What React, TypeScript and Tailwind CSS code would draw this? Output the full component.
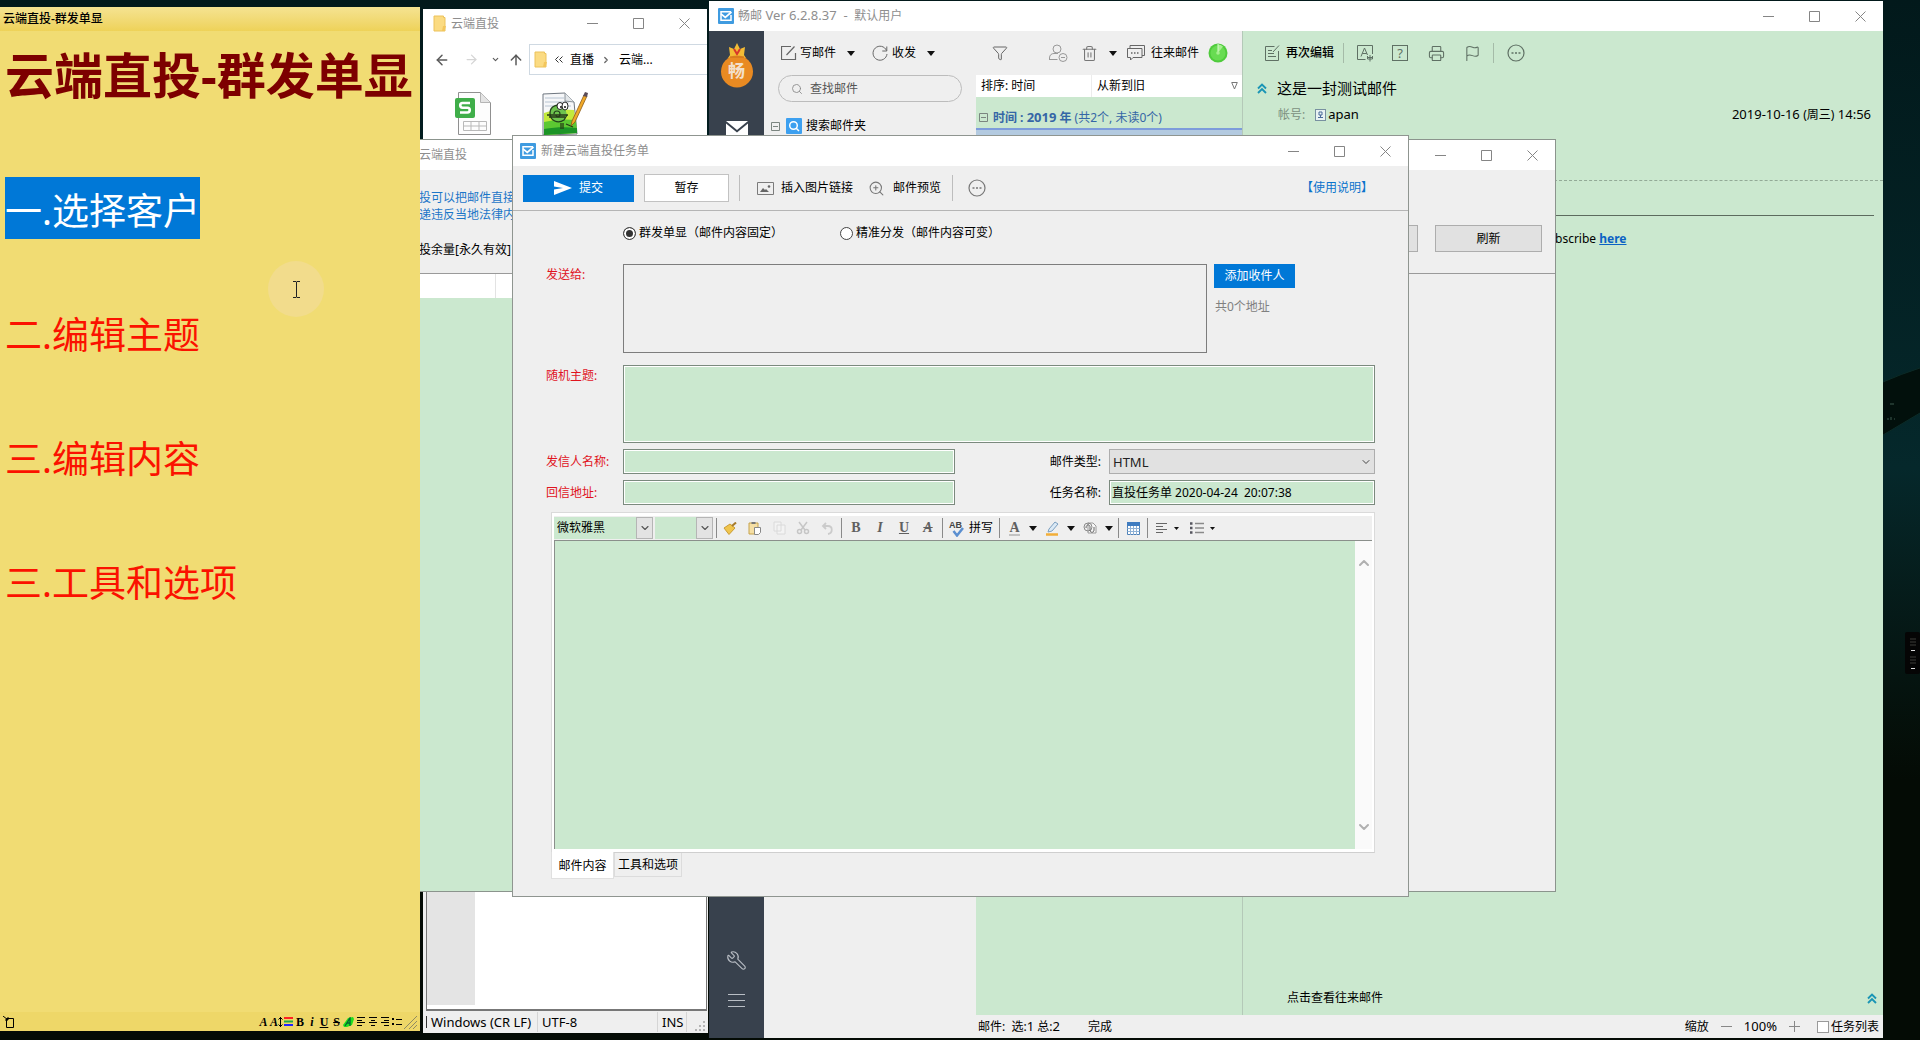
import React from "react";
import {
  ArrowLeft,
  ArrowRight,
  ArrowUp,
  ChevronDown,
  ChevronUp,
  ChevronRight,
  Filter,
  Flag,
  Printer,
  Search,
  Trash2,
  Wrench,
  ZoomIn,
} from "lucide-react";

function Svg({ w, h, box, className = "", children }: { w: number; h: number; box?: string; className?: string; children: React.ReactNode }) {
  return (
    <svg width={w} height={h} viewBox={box ?? `0 0 ${w} ${h}`} fill="none" className={`shrink-0 ${className}`} aria-hidden="true">
      {children}
    </svg>
  );
}

function AppIcon() {
  return (
    <Svg w={16} h={16}>
      <rect width="16" height="16" rx="1" fill="#3f9be0" />
      <path d="M13 7v5.300H3V3.700h10" stroke="#fff" strokeWidth="1.500" />
      <path d="M3 5.800 7.300 9.400 13.500 4" stroke="#fff" strokeWidth="1.700" />
    </Svg>
  );
}

function FolderIcon({ className = "" }: { className?: string }) {
  return (
    <Svg w={14} h={17} className={className}>
      <path d="M1 1h9.500v1.500H12v13.500H1z" fill="#fbdb82" stroke="#ecc25b" strokeWidth="1" />
      <path d="M10 11h3l-1.500 5H9z" fill="#f3c65c" />
    </Svg>
  );
}

function MoreIcon({ className = "" }: { className?: string }) {
  return (
    <Svg w={18} h={18} className={className}>
      <circle cx="9" cy="9" r="8" stroke="currentColor" strokeWidth="1.200" />
      <path d="M4.500 9h2M8 9h2M11.500 9h2" stroke="currentColor" strokeWidth="1.600" />
    </Svg>
  );
}

function DoubleChevron() {
  return (
    <Svg w={10} h={11}>
      <path d="m1 5.500 4-4 4 4M1 10l4-4 4 4" stroke="#1a95b5" strokeWidth="1.900" />
    </Svg>
  );
}

function WindowButtons() {
  return (
    <div className="ml-auto flex h-full shrink-0 text-[#858585]">
      <button aria-label="最小化" className="flex w-[46px] items-center justify-center">
        <Svg w={11} h={11}><path d="M0 5.500h11" stroke="currentColor" /></Svg>
      </button>
      <button aria-label="最大化" className="flex w-[46px] items-center justify-center">
        <Svg w={11} h={11}><path d="M.5.5h10v10H.5z" stroke="currentColor" /></Svg>
      </button>
      <button aria-label="关闭" className="flex w-[46px] items-center justify-center">
        <Svg w={11} h={11}><path d="M.5.5l10 10M10.500.5l-10 10" stroke="currentColor" /></Svg>
      </button>
    </div>
  );
}

function Caret({ className = "" }: { className?: string }) {
  return (
    <Svg w={8} h={5} className={className}><path d="M0 0h8L4 5z" fill="#111" /></Svg>
  );
}

function Expander() {
  return (
    <Svg w={9} h={9}><path d="M.5.5h8v8h-8zM2 4.500h5" stroke="#7b8580" /></Svg>
  );
}

function StickyNote() {
  return (
    <section className="absolute top-[7px] bottom-[9px] left-0 z-30 flex w-[420px] flex-col bg-[#f1dc73]">
      <header className="flex h-6 shrink-0 items-center bg-linear-to-b from-[#f5e391] to-[#eed258] pl-[3px] text-[12px] leading-6 font-medium text-black">
        云端直投-群发单显
      </header>
      <div className="flex-1 px-[5px] text-[37px] leading-[56px] text-[#fb1200]">
        <h1 className="pt-1 text-[49px] leading-[80px] font-bold whitespace-nowrap text-[#7d0000]">云端直投-群发单显</h1>
        <p className="mt-[62px] flex"><span className="bg-[#0078d7] pt-[6px] text-white">一.选择客户</span></p>
        <p className="mt-[62px] pt-[6px]">二.编辑主题</p>
        <p className="mt-[62px] pt-[6px]">三.编辑内容</p>
        <p className="mt-[62px] pt-[6px]">三.工具和选项</p>
      </div>
      <div className="absolute top-[254px] left-[268px] flex size-14 items-center justify-center rounded-full bg-[#f2dc8c]">
        <Svg w={9} h={17}><path d="M1 .5h3l.5.5.5-.5h3M1 16.500h3l.5-.5.5.5h3M4.500 1v15" stroke="#222" /></Svg>
      </div>
      <footer className="flex h-[19px] shrink-0 items-center bg-[#eed768] pr-[3px] pl-[3px] text-black">
        <Svg w={12} h={12}><path d="M3.500 2.500h7v9h-7zM0 0l5 4M5 1v3H2" stroke="#000" /></Svg>
        <div className="ml-auto flex items-center gap-[1px] font-[Liberation_Serif] text-[12px] leading-[12px] font-bold">
          <button aria-label="字体" className="w-[11px] italic">A</button>
          <button aria-label="字号" className="flex w-[12px] items-center italic">A<Svg w={5} h={10}><path d="M2.500 0v10M.5 2.500l2-2 2 2M.5 7.500l2 2 2-2" stroke="#000" /></Svg></button>
          <button aria-label="颜色" className="flex w-[10px] justify-center">
            <Svg w={9} h={9}><path d="M0 1h9" stroke="#f22" strokeWidth="2" /><path d="M0 4.500h9" stroke="#2a4" strokeWidth="2" /><path d="M0 8h9" stroke="#22f" strokeWidth="2" /></Svg>
          </button>
          <button aria-label="粗体" className="w-[12px]">B</button>
          <button aria-label="斜体" className="w-[10px] italic">i</button>
          <button aria-label="下划线" className="w-[12px] underline">U</button>
          <button aria-label="删除线" className="w-[11px] line-through">S</button>
          <button aria-label="高亮" className="flex w-[11px] justify-center">
            <Svg w={11} h={10}><path d="M0 8 5 1l5-1 1 2-2 6-5 2H1z" fill="#1fe01f" /><path d="m2 9 5-8v8M4 6h3" stroke="#063" strokeWidth="1.300" /></Svg>
          </button>
          <button aria-label="左对齐" className="flex w-[11px] justify-center"><Svg w={8} h={9}><path d="M0 .5h8M0 3.500h5M0 5.500h8M0 8.500h5" stroke="#000" /></Svg></button>
          <button aria-label="居中" className="flex w-[11px] justify-center"><Svg w={8} h={9}><path d="M0 .5h8M2 3.500h4M0 5.500h8M2 8.500h4" stroke="#000" /></Svg></button>
          <button aria-label="右对齐" className="flex w-[11px] justify-center"><Svg w={8} h={9}><path d="M0 .5h8M3 3.500h5M0 5.500h8M3 8.500h5" stroke="#000" /></Svg></button>
          <button aria-label="列表" className="flex w-[12px] justify-center"><Svg w={10} h={8}><path d="M0 1h2M0 6h2" stroke="#000" strokeWidth="2" /><path d="M4 1.500h6M4 6.500h6" stroke="#000" /></Svg></button>
        </div>
        <Svg w={14} h={14}><path d="M1 14 14 1M6 14l8-8M10 14l4-4" stroke="#8f8a63" /></Svg>
      </footer>
    </section>
  );
}

function ExplorerWindow() {
  return (
    <section className="absolute top-[9px] left-[423px] flex h-[240px] w-[284px] flex-col bg-white">
      <header className="flex h-[29px] shrink-0 items-center pl-[10px] text-[12px] text-[#8e8e8e]">
        <FolderIcon />
        <span className="ml-1">云端直投</span>
        <WindowButtons />
      </header>
      <nav className="mt-[6px] flex h-[31px] shrink-0 items-center text-[#5a5a5a]">
        <button aria-label="后退" className="ml-[11px]"><ArrowLeft size={16} strokeWidth={2.25} /></button>
        <button aria-label="前进" className="ml-[14px] text-[#d5d5d5]"><ArrowRight size={15} strokeWidth={2} /></button>
        <button aria-label="最近" className="ml-[12px]"><ChevronDown size={9} strokeWidth={3} /></button>
        <button aria-label="上移" className="ml-[8px]"><ArrowUp size={16} strokeWidth={2.25} /></button>
        <div className="ml-auto flex h-full w-[178px] items-center border border-r-0 border-[#cfd9e2] pl-1 text-[12px] text-black">
          <FolderIcon />
          <Svg w={8} h={7} className="mr-[7px] ml-[7px]"><path d="m3.500.5-3 3 3 3M7.500.5l-3 3 3 3" stroke="#333" /></Svg>
          <span>直播</span>
          <ChevronRight size={10} strokeWidth={3} className="ml-[7px] text-[#666]" />
          <span className="ml-[8px]">云端...</span>
        </div>
      </nav>
      <div className="mt-[16px] flex gap-[48px] pl-[31px]">
        <Svg w={39} h={45}>
          <path d="M4.500 1.500h22l10 10v32h-32z" fill="#fdfdfd" stroke="#909090" strokeLinejoin="round" />
          <path d="M26.500 1.500v10h10" fill="#e4e4e4" stroke="#b5b5b5" />
          <path d="M9.500 30.500h23v9h-23zM9.500 35h23M17 30.500v9M25 30.500v9" stroke="#b9b9b9" />
          <rect x="1" y="7" width="20" height="20" rx="2" fill="#3fae49" />
          <path d="M16 12H8.500c-3 0-3 4.700 0 4.700h5c3 0 3 4.800 0 4.800H6" stroke="#fff" strokeWidth="2.600" />
        </Svg>
        <Svg w={47} h={45}>
          <path d="M2 3 24 2l9 9 3 32-34 1z" fill="#f6f7f9" stroke="#6f7780" />
          <path d="M4 7h19M4 11h24M4 15h26" stroke="#b7c4d2" />
          <path d="M24 2v8l9 1" fill="#e3e7ea" stroke="#8a9299" />
          <path d="M3 22c10-4 20-4 30-3l3 23-33 2z" fill="#c3ea3c" />
          <path d="M3 31c12-3 22-3 32-2l1 13-33 2z" fill="#5cc832" />
          <path d="M3 38c12-2 22-2 33-1v5l-33 2z" fill="#1c9427" />
          <path d="M24 17c-6-6-15-2-15 5 0 8 8 11 14 7l3-5" fill="#6dc34e" stroke="#22401c" strokeWidth="1.300" />
          <path d="M13 23c0-4 6-4 6 0s-4 3-4 1" stroke="#22401c" strokeWidth="1.200" />
          <ellipse cx="19" cy="15" rx="3" ry="3.500" fill="#fff" stroke="#222" />
          <ellipse cx="24" cy="15" rx="3" ry="4" fill="#fff" stroke="#222" />
          <path d="M6 24h21M8 26h16M20 32v6M22 32v6M25 33l7 3" stroke="#273a17" strokeWidth="1.300" />
          <circle cx="20" cy="16" r="1" fill="#111" /><circle cx="24" cy="16" r="1" fill="#111" />
          <path d="M43 4 31 30l-1 5 4-4L46 5z" fill="#f0a928" stroke="#8a5b18" strokeWidth=".8" />
          <path d="m42 5 2-4 3 1-1 4z" fill="#5b4c58" />
        </Svg>
      </div>
    </section>
  );
}

function EditorWindow() {
  return (
    <section className="absolute bottom-[7px] left-[423px] flex h-[240px] w-[285px] flex-col bg-[#efefef]">
      <div className="mr-px ml-[3px] flex flex-1 border-x border-b-2 border-[#777] bg-white pb-1"><div className="w-[48px] bg-[#e4e4e4]" /></div>
      <footer className="flex h-[22px] shrink-0 items-center text-[13px] leading-5 text-black">
        <div className="ml-[3px] h-3 border-l border-[#333]" />
        <span className="ml-1 flex-1 whitespace-nowrap">Windows (CR LF)</span>
        <span className="w-[120px] border-l border-[#d5d5d5] pl-1">UTF-8</span>
        <span className="w-[30px] border-x border-[#d5d5d5] pl-1">INS</span>
        <Svg w={21} h={20}><path d="M16 10h2M12 14h2M16 14h2M8 18h2M12 18h2M16 18h2" stroke="#b5b5b5" strokeWidth="2" /></Svg>
      </footer>
    </section>
  );
}

function MoneyBag() {
  return (
    <div className="relative h-[46px] w-[34px]">
      <Svg w={34} h={46}>
        <path d="m9 5 5 2 3-6 3 6 5-2-1 8 2 3H8l2-3z" fill="#f3bb35" />
        <path d="m14 7 3 5 3-5" stroke="#d8372b" strokeWidth="2" />
        <circle cx="17" cy="29.500" r="16" fill="#e98a22" />
        <path d="M10 15h14" stroke="#c96f18" />
      </Svg>
      <span className="absolute inset-x-0 top-[18px] text-center text-[17px] leading-[22px] font-bold text-[#f3e0cc]">畅</span>
    </div>
  );
}

function MailSidebar() {
  return (
    <nav className="flex w-[55px] shrink-0 flex-col items-center bg-[#38414d] text-[#b9bec5]">
      <div className="mt-[11px]"><MoneyBag /></div>
      <button aria-label="邮件" className="mt-[33px]">
        <Svg w={22} h={16}><path d="M0 0h22L11 9zM0 2.500l11 9 11-9V16H0z" fill="#fff" /></Svg>
      </button>
      <button aria-label="工具" className="mt-auto"><Wrench size={21} strokeWidth={1.25} className="-scale-x-100" /></button>
      <button aria-label="菜单" className="mt-[23px] mb-[30px]">
        <Svg w={17} h={14}><path d="M0 .5h17M0 6.500h17M0 12.500h17" stroke="currentColor" /></Svg>
      </button>
    </nav>
  );
}

function FolderPanel() {
  return (
    <div className="w-[212px] shrink-0 text-black">
      <div className="flex h-11 items-center pl-[17px]">
        <button className="flex items-center gap-[3px]">
          <Svg w={16} h={16}><path d="M10 1.500H.5v13h14V8M5.500 10l8-8.500" stroke="#666" strokeWidth="1.200" /></Svg>
          写邮件
        </button>
        <button aria-label="写邮件选项" className="ml-[11px]"><Caret /></button>
        <button className="ml-[17px] flex items-center gap-1">
          <Svg w={16} h={16}><path d="M14.500 5.500A7 7 0 1 0 15 9M14.800 1.500v4.500h-4.500" stroke="#666" /></Svg>
          收发
        </button>
        <button aria-label="收发选项" className="ml-[11px]"><Caret /></button>
      </div>
      <label className="mx-[14px] flex h-[27px] items-center rounded-full border border-[#bcbcbc] pl-[12px] text-[#8a8a8a]">
        <Search size={12} strokeWidth={1.75} />
        <input aria-label="查找邮件" placeholder="查找邮件" className="ml-[7px] w-[130px] bg-transparent outline-none placeholder:text-[#555]" />
      </label>
      <div className="mt-[15px] flex items-center pl-[7px]">
        <Expander />
        <Svg w={16} h={16} className="ml-[6px]">
          <rect width="16" height="16" rx="1" fill="#3da0f0" /><circle cx="7.500" cy="7.500" r="3.800" stroke="#fff" strokeWidth="1.500" /><path d="m10 10 3 3" stroke="#fff" strokeWidth="1.500" />
        </Svg>
        <span className="ml-1">搜索邮件夹</span>
      </div>
    </div>
  );
}

function MessageList() {
  return (
    <div className="flex w-[267px] shrink-0 flex-col border-r border-[#b4c9b8] bg-[#cbe8cf] text-black">
      <div className="flex h-11 shrink-0 items-center bg-[#efefef] pl-[16px] text-[#777]">
        <button aria-label="筛选"><Filter size={16} strokeWidth={1.5} className="text-[#666]" /></button>
        <button aria-label="移除联系人" className="ml-[41px]">
          <Svg w={19} h={19}><circle cx="8" cy="5" r="4" stroke="#999" /><path d="M.5 16v-2c0-3 2-4.500 4.500-4.500h4M.5 15.500h8" stroke="#999" /><circle cx="14" cy="13.500" r="4" stroke="#999" /><path d="M12 13.500h4" stroke="#999" /></Svg>
        </button>
        <button aria-label="删除" className="ml-[13px]"><Trash2 size={17} strokeWidth={1.5} /></button>
        <button aria-label="删除选项" className="ml-[11px]"><Caret /></button>
        <button className="ml-[10px] flex items-center gap-[6px] text-black">
          <Svg w={18} h={16}><path d="M3 3.500V.5h14.500v10H15M.5 3.500H15v9H6l-2.500 2.500v-2.500h-3z" stroke="#666" /><path d="M4 8h1.500M7 8h1.500M10 8h1.500" stroke="#666" strokeWidth="1.500" /></Svg>
          往来邮件
        </button>
        <Svg w={20} h={20} className="ml-[9px]">
          <circle cx="10" cy="10" r="9.500" fill="#4fcb3c" />
          <circle cx="10" cy="10" r="7.500" fill="#68dc52" />
          <path d="M10 10V1.500a8.500 8.500 0 0 1 5 2z" fill="#a5f08f" />
          <path d="M10 10V1" stroke="#d6fbcb" />
          <circle cx="10" cy="10" r="1.800" fill="#a5f08f" />
        </Svg>
      </div>
      <div className="flex h-[22px] shrink-0 items-center bg-white leading-[22px]">
        <span className="w-[116px] border-r border-[#ececec] pl-[5px]">排序: 时间</span>
        <span className="pl-[5px]">从新到旧</span>
        <Svg w={7} h={8} className="mr-[4px] ml-auto"><path d="M.7.5h5.600L3.500 7z" stroke="#777" /></Svg>
      </div>
      <div className="flex h-[33px] shrink-0 items-center border-b-2 border-[#7d9cdb] pt-[10px] pl-[3px] whitespace-pre text-[#3566a6]">
        <Expander />
        <span className="ml-[5px] text-[12px]"><b>时间 : <span className="text-[13px]">2019</span> 年</b> (共2个, 未读0个)</span>
      </div>
      <div className="h-10 bg-[#b3cae0]" />
    </div>
  );
}

function ReadingPane() {
  return (
    <article className="flex min-w-0 flex-1 flex-col bg-[#cbe8cf] text-black">
      <div className="flex h-11 shrink-0 items-center pl-[22px] text-[#5f7064]">
        <button className="flex items-center gap-[6px] font-medium text-black">
          <Svg w={15} h={16}><path d="M9.500 1.500H.5v14h13V6M3 5.500h4M3 8.500h6M3 11.500h8M8 7l6-6.500" stroke="#5f7064" /></Svg>
          再次编辑
        </button>
        <div className="mr-[13px] ml-[9px] h-5 border-l border-[#a5bba8]" />
        <button aria-label="编码"><Svg w={17} h={17}><path d="M15.500 9V.5H.5v14h8M4 11.500l3.500-8.500 3 7M5.300 8.500h4.500M10 12.500h6M13 10v6.500M10.500 11v3h5v-3" stroke="currentColor" /></Svg></button>
        <button aria-label="帮助" className="ml-[18px] flex h-4 w-4 items-center justify-center border border-[#5f7064] text-[13px] leading-none">?</button>
        <button aria-label="打印" className="ml-[20px]"><Printer size={17} strokeWidth={1.5} /></button>
        <button aria-label="标记" className="ml-[19px]"><Flag size={17} strokeWidth={1.5} /></button>
        <div className="mr-[13px] ml-[12px] h-5 border-l border-[#a5bba8]" />
        <button aria-label="更多"><MoreIcon /></button>
      </div>
      <div className="flex h-[26px] shrink-0 items-center pl-[14px]">
        <DoubleChevron />
        <h2 className="ml-[10px] text-[15px] leading-6">这是一封测试邮件</h2>
      </div>
      <div className="flex h-[28px] shrink-0 items-center pr-[12px] pl-[35px] text-[13px]">
        <span className="text-[12px] text-[#7c9080]">帐号:</span>
        <Svg w={11} h={12} className="ml-[10px]"><rect x=".5" y=".5" width="10" height="11" fill="#e8f2f2" stroke="#7890a0" /><path d="M4 3h3v3H4zM3 8.500h5M5.500 6v3" stroke="#4a6a9a" /></Svg>
        <span className="ml-[2px]">apan</span>
        <time className="ml-auto">2019-10-16 <span className="text-[12px]">(周三)</span> 14:56</time>
      </div>
      <div className="mt-[51px] border-t border-dashed border-[#93aa97]" />
      <div className="mt-[34px] mr-[9px] border-t border-[#5c6b5e]" />
      <p className="mt-[13px] pl-[312px] text-[12px] leading-5">
        bscribe <a href="#here" className="font-bold text-[#0b62c4] underline">here</a>
      </p>
      <div className="mt-auto flex h-[34px] shrink-0 items-center justify-between pr-[6px] pl-[44px]">
        <button>点击查看往来邮件</button>
        <button aria-label="展开"><DoubleChevron /></button>
      </div>
    </article>
  );
}

function MailWindow() {
  return (
    <section className="absolute top-px right-[37px] bottom-[2px] left-[709px] z-10 flex flex-col bg-[#efefef] text-[12px]">
      <header className="flex h-[30px] shrink-0 items-center bg-white pl-[9px] text-[#8e8e8e]">
        <AppIcon />
        <h1 className="ml-1 text-[13px] whitespace-pre"><span className="text-[12px]">畅邮</span> Ver 6.2.8.37  -  <span className="text-[12px]">默认用户</span></h1>
        <WindowButtons />
      </header>
      <div className="flex min-h-0 flex-1">
        <MailSidebar />
        <div className="flex min-w-0 flex-1 flex-col">
          <div className="flex min-h-0 flex-1">
            <FolderPanel />
            <MessageList />
            <ReadingPane />
          </div>
          <footer className="flex h-[23px] shrink-0 items-center pr-1 pl-[214px] text-black">
            <span className="whitespace-pre">邮件:  选:<span className="text-[13px]">1</span> 总:<span className="text-[13px]">2</span></span>
            <span className="ml-[28px]">完成</span>
            <span className="ml-auto">缩放</span>
            <button aria-label="缩小" className="ml-[12px] text-[#888]"><Svg w={11} h={11}><path d="M0 5.500h11" stroke="currentColor" /></Svg></button>
            <span className="ml-[12px] text-[13px]">100%</span>
            <button aria-label="放大" className="ml-[12px] text-[#888]"><Svg w={11} h={11}><path d="M0 5.500h11M5.500 0v11" stroke="currentColor" /></Svg></button>
            <label className="ml-[17px] flex items-center gap-[2px]">
              <input type="checkbox" className="size-[12px] appearance-none border border-[#9a9a9a] bg-white" />
              任务列表
            </label>
          </footer>
        </div>
      </div>
    </section>
  );
}

function DeliveryWindow() {
  return (
    <section className="absolute top-[139px] right-[364px] bottom-[148px] left-[400px] z-20 flex flex-col border border-[#8b948d] bg-[#efefef] text-[12px]">
      <header className="flex h-[30px] shrink-0 items-center bg-white pl-[18px] text-[#8e8e8e]">
        云端直投
        <WindowButtons />
      </header>
      <div className="flex h-[104px] shrink-0 border-b border-[#9a9a9a] pl-[18px]">
        <div className="pt-[19px]">
          <p className="leading-[17px] text-[#1c76c8]">投可以把邮件直接</p>
          <p className="leading-[17px] text-[#1c76c8]">递违反当地法律内</p>
          <p className="mt-[18px] leading-[17px] text-black">投余量[永久有效]</p>
        </div>
        <div className="ml-auto flex gap-[17px] pt-[55px] pr-[13px]">
          <button aria-label="设置" className="h-[27px] w-[107px] border border-[#adadad] bg-[#e1e1e1]" />
          <button className="h-[27px] w-[107px] border border-[#adadad] bg-[#e1e1e1] text-black">刷新</button>
        </div>
      </div>
      <div className="mr-[160px] flex flex-1 flex-col bg-[#cbe8cf]">
        <div className="flex h-[24px] bg-white"><div className="w-[95px] border-r border-[#e3e3e3]" /></div>
      </div>
    </section>
  );
}

const FIELD = "border border-[#7b8a7e] bg-[#cbe8cf] ring-1 ring-white ring-inset outline-none";
const LABEL = "w-[77px] shrink-0 text-[#e0141e]";

function Radio({ label, checked, className = "" }: { label: string; checked?: boolean; className?: string }) {
  return (
    <label className={`flex items-center gap-[3px] text-black ${className}`}>
      <input
        type="radio"
        name="mode"
        defaultChecked={checked}
        className="size-[13px] appearance-none rounded-full border border-[#444] bg-white checked:bg-[#333] checked:shadow-[inset_0_0_0_2px_white]"
      />
      {label}
    </label>
  );
}

function Sep() {
  return <div className="h-5 w-px shrink-0 bg-[#8a8a8a]" />;
}

function Tool({ label, children, className = "w-6" }: { label: string; children: React.ReactNode; className?: string }) {
  return (
    <button type="button" aria-label={label} className={`flex h-full shrink-0 items-center justify-center ${className}`}>
      {children}
    </button>
  );
}

function Combo({ label, value, className }: { label: string; value: string; className: string }) {
  return (
    <div className={`relative h-[22px] shrink-0 bg-[#cbe8cf] ${className}`}>
      <select aria-label={label} className="size-full appearance-none bg-transparent pl-[3px] text-black outline-none">
        <option>{value}</option>
      </select>
      <span className="pointer-events-none absolute inset-y-0 right-0 flex w-[17px] items-center justify-center border border-[#b5b5b5] bg-[#e3e3e3] text-[#555]">
        <ChevronDown size={12} strokeWidth={2.25} />
      </span>
    </div>
  );
}

function FormatBar() {
  return (
    <div className="flex h-[27px] shrink-0 items-center border-t-3 border-white bg-[#efefef]">
      <Combo label="字体" value="微软雅黑" className="w-[99px]" />
      <Combo label="字号" value="" className="ml-[2px] w-[58px]" />
      <div className="ml-[3px]"><Sep /></div>
      <div className="ml-[1px] flex h-full">
        <Tool label="格式刷"><Svg w={14} h={13}><path d="M1 6 7 2l5 4-6 6.500z" fill="#f0c54d" stroke="#c99c35" /><path d="m9 4 4-3.500" stroke="#a77b2b" strokeWidth="2" /></Svg></Tool>
        <Tool label="粘贴" className="w-[26px]"><Svg w={14} h={14}><path d="M1 2h9v11H1z" fill="#f5dfa5" stroke="#c6a34c" /><path d="M3.500 1h4v2h-4z" fill="#777" /><path d="M6.500 6.500h6v5l-2 2h-4z" fill="#fff" stroke="#888" /></Svg></Tool>
        <Tool label="复制" className="w-[23px]"><Svg w={13} h={14}><path d="M1 1h7v9H1zM4 4h8v9H4z" fill="#f3f3f3" stroke="#dadada" /></Svg></Tool>
        <Tool label="剪切"><Svg w={14} h={14}><path d="m3 1 6 8M11 1 5 9" stroke="#c6c6c6" strokeWidth="1.500" /><circle cx="3.500" cy="10.500" r="2" stroke="#c6c6c6" strokeWidth="1.500" /><circle cx="10.500" cy="10.500" r="2" stroke="#c6c6c6" strokeWidth="1.500" /></Svg></Tool>
        <Tool label="撤销"><Svg w={13} h={13}><path d="M5 1 2 4l3 3M2 4h5c5 0 5 7 0 8" stroke="#cbcbcb" strokeWidth="1.800" /></Svg></Tool>
      </div>
      <div className="ml-[2px]"><Sep /></div>
      <div className="ml-[2px] flex h-full font-[Liberation_Serif] text-[14px] font-bold text-[#606060]">
        <Tool label="粗体">B</Tool>
        <Tool label="斜体"><i>I</i></Tool>
        <Tool label="下划线"><u>U</u></Tool>
        <Tool label="删除线"><s className="italic">A</s></Tool>
      </div>
      <div className="ml-[2px]"><Sep /></div>
      <button type="button" className="ml-[6px] flex items-center gap-[5px] text-black">
        <span className="relative h-[18px] w-[15px]">
          <span className="absolute top-[2px] left-0 font-[Liberation_Sans] text-[9px] leading-[9px] font-bold text-[#444]">AB</span>
          <Svg w={12} h={10} className="absolute right-0 bottom-0"><path d="m1.500 4 3.500 4.500L11 1" stroke="#5b8fd0" strokeWidth="2.500" /></Svg>
        </span>
        拼写
      </button>
      <div className="ml-[6px]"><Sep /></div>
      <Tool label="文字颜色" className="ml-[3px] w-[23px] font-[Liberation_Serif] text-[14px] font-bold text-[#606060]"><span className="border-b-2 border-[#c2c2c2] leading-[13px]">A</span></Tool>
      <Tool label="文字颜色选项" className="w-[14px]"><Caret /></Tool>
      <Tool label="突出显示"><Svg w={14} h={15}><path d="m4 8 6-7 3 2-6 7-4 1z" fill="#dbe9f5" stroke="#7b9fc0" /><path d="M1 13.500h12" stroke="#f2ae38" strokeWidth="2.500" /></Svg></Tool>
      <Tool label="突出显示选项" className="w-[14px]"><Caret /></Tool>
      <Tool label="附件"><Svg w={14} h={14}><path d="M5 2h5l3 3v7H5z" stroke="#9a9a9a" fill="#f7f7f7" /><circle cx="5" cy="6" r="4" stroke="#8a8a8a" /><path d="M3 7c0-4 4-4 4-1v3c0 3 4 3 4 0V6" stroke="#666" /></Svg></Tool>
      <Tool label="附件选项" className="w-[14px]"><Caret /></Tool>
      <div className="ml-[2px]"><Sep /></div>
      <Tool label="表格" className="w-[28px]"><Svg w={13} h={13}><path d="M.5.5h12v12H.5z" fill="#fff" stroke="#4f82b8" /><path d="M0 0h13v4H0z" fill="#3f7cc0" /><path d="M.5 6.500h12M.5 9.500h12M3.500 4v9M6.500 4v9M9.500 4v9" stroke="#8fb2d6" /></Svg></Tool>
      <Sep />
      <Tool label="对齐" className="ml-[1px] w-[25px]"><Svg w={11} h={11}><path d="M0 .5h11M0 3.500h7M0 6.500h11M0 9.500h7" stroke="#666" /></Svg></Tool>
      <Svg w={5} h={3}><path d="M0 0h5L2.500 3z" fill="#111" /></Svg>
      <Tool label="列表" className="ml-[5px] w-[26px]"><Svg w={14} h={12}><path d="M0 1.500h2.500M0 6h2.500M0 10.500h2.500" stroke="#56565f" strokeWidth="2.500" /><path d="M5 1.500h9M5 6h9M5 10.500h9" stroke="#8a8a8a" strokeWidth="1.300" /></Svg></Tool>
      <Svg w={5} h={3}><path d="M0 0h5L2.500 3z" fill="#111" /></Svg>
    </div>
  );
}

function ComposeDialog() {
  return (
    <section className="absolute top-[135px] right-[511px] bottom-[143px] left-[512px] z-30 flex flex-col border border-[#8f9590] bg-[#efefef] text-[12px] leading-[18px]">
      <header className="flex h-[30px] shrink-0 items-center bg-white pl-[7px] text-[#8e8e8e]">
        <AppIcon />
        <h2 className="ml-[5px]">新建云端直投任务单</h2>
        <WindowButtons />
      </header>
      <div className="flex h-[45px] shrink-0 items-center border-b border-[#b5b5b5] pr-[35px] pl-[10px] text-black">
        <button className="flex h-[27px] w-[111px] items-center justify-center gap-[7px] bg-[#0078d7] text-white">
          <Svg w={18} h={14}><path d="M0 0l18 7-18 7V8.500l9-1.500-9-1.500z" fill="#fff" /></Svg>
          提交
        </button>
        <button className="ml-[10px] h-[28px] w-[85px] border border-[#c2c2c2] bg-white">暂存</button>
        <div className="mr-[17px] ml-[10px] h-[26px] border-l border-[#bdbdbd]" />
        <button className="flex items-center gap-[7px]">
          <Svg w={17} h={13}><path d="M.5.5h16v12H.5z" stroke="#7b7b7b" /><path d="m3 10 3-4 2 2 1-1 3 3z" fill="#666" /><circle cx="12" cy="4.500" r="1.300" fill="#666" /></Svg>
          插入图片链接
        </button>
        <button className="ml-[15px] flex items-center gap-[8px]"><ZoomIn size={17} strokeWidth={1.5} className="text-[#777]" />邮件预览</button>
        <div className="mr-[15px] ml-[11px] h-[26px] border-l border-[#bdbdbd]" />
        <button aria-label="更多"><MoreIcon className="text-[#777]" /></button>
        <a href="#help" className="ml-auto text-[#0a73cc]">【使用说明】</a>
      </div>
      <form className="flex min-h-0 flex-1 flex-col pr-[33px] pb-[17px] pl-[33px]">
        <div className="flex h-11 shrink-0 items-center pl-[77px]">
          <Radio label="群发单显（邮件内容固定）" checked />
          <Radio label="精准分发（邮件内容可变）" className="ml-[57px]" />
        </div>
        <div className="mt-[9px] flex shrink-0">
          <label htmlFor="to" className={`${LABEL} pt-[2px]`}>发送给:</label>
          <textarea id="to" className="h-[89px] flex-1 resize-none border border-[#7d7d7d] bg-[#efefef] outline-none" />
          <div className="ml-[7px] flex w-[161px] flex-col items-start">
            <button type="button" className="h-[24px] w-[81px] bg-[#0078d7] text-white">添加收件人</button>
            <span className="mt-[10px] ml-px text-[#808080]">共0个地址</span>
          </div>
        </div>
        <div className="mt-3 flex shrink-0">
          <label htmlFor="subject" className={`${LABEL} pt-[2px]`}>随机主题:</label>
          <textarea id="subject" className={`h-[78px] flex-1 resize-none ${FIELD}`} />
        </div>
        <div className="mt-[6px] flex shrink-0 items-center">
          <label htmlFor="sender" className={LABEL}>发信人名称:</label>
          <input id="sender" className={`h-[25px] w-[332px] ${FIELD}`} />
          <label htmlFor="kind" className="mr-[8px] ml-auto text-black">邮件类型:</label>
          <div className="relative h-[25px] w-[266px]">
            <select id="kind" className="size-full appearance-none border border-[#adadad] bg-[#e1e1e1] pl-[3px] text-[13px] text-[#222] outline-none">
              <option>HTML</option>
            </select>
            <ChevronDown size={12} strokeWidth={2} className="pointer-events-none absolute top-[7px] right-[3px] text-[#444]" />
          </div>
        </div>
        <div className="mt-[6px] flex shrink-0 items-center">
          <label htmlFor="reply" className={LABEL}>回信地址:</label>
          <input id="reply" className={`h-[25px] w-[332px] ${FIELD}`} />
          <label htmlFor="task" className="mr-[8px] ml-auto text-black">任务名称:</label>
          <input id="task" defaultValue="直投任务单 2020-04-24  20:07:38" className={`h-[25px] w-[266px] pb-[2px] pl-[2px] text-black ${FIELD}`} />
        </div>
        <div className="mt-[7px] ml-[5px] flex min-h-0 flex-1 flex-col border border-[#dadada] border-b-[#cfcfcf] bg-white px-[2px] pb-[3px]">
          <FormatBar />
          <div className="flex min-h-0 flex-1 border-t border-l border-[#8a8f8b]">
            <textarea aria-label="邮件内容" className="min-w-0 flex-1 resize-none bg-[#cbe8cf] outline-none" />
            <div className="flex w-[17px] flex-col items-center justify-between bg-[#fafafa] py-[14px] text-[#b0b0b0]">
              <ChevronUp size={16} strokeWidth={3} />
              <ChevronDown size={16} strokeWidth={3} />
            </div>
          </div>
        </div>
        <div role="tablist" className="ml-[5px] flex shrink-0 items-start text-black">
          <button type="button" role="tab" aria-selected="true" className="-mt-px h-[27px] w-[63px] border border-t-0 border-[#e0e0e0] bg-white pt-[2px]">邮件内容</button>
          <button type="button" role="tab" aria-selected="false" className="h-[24px] w-[68px] border border-t-0 border-[#dcdcdc]">工具和选项</button>
        </div>
      </form>
    </section>
  );
}

export default function App() {
  return (
    <main
      lang="zh-CN"
      className="relative h-screen w-full overflow-hidden bg-linear-to-b from-[#02191b] via-[#05282b] via-45% to-[#040b05] to-75% font-['Noto_Sans','Noto_Sans_CJK_SC',sans-serif]"
    >
      <Svg w={37} h={70} className="absolute top-[367px] right-0">
        <path d="M0 15 Q18 7 37 1V46L0 68z" fill="#02100c" />
        <path d="M0 15 Q18 7 37 1M0 68 37 46" stroke="#0c2b27" />
        <path d="M4 52h2M8 50v3M11 52h1M7 37h4" stroke="#3c5a4e" />
      </Svg>
      <Svg w={15} h={42} className="absolute top-[632px] right-0">
        <rect width="15" height="42" rx="2" fill="#050505" />
        <path d="M5 7h6M5 10h6M5 13h6M5 25h6M5 28h6M5 31h6" stroke="#3c3c38" />
        <path d="M6 18.500h4M6 36.500h4" stroke="#ddd" />
      </Svg>
      <ExplorerWindow />
      <EditorWindow />
      <MailWindow />
      <DeliveryWindow />
      <StickyNote />
      <ComposeDialog />
    </main>
  );
}
